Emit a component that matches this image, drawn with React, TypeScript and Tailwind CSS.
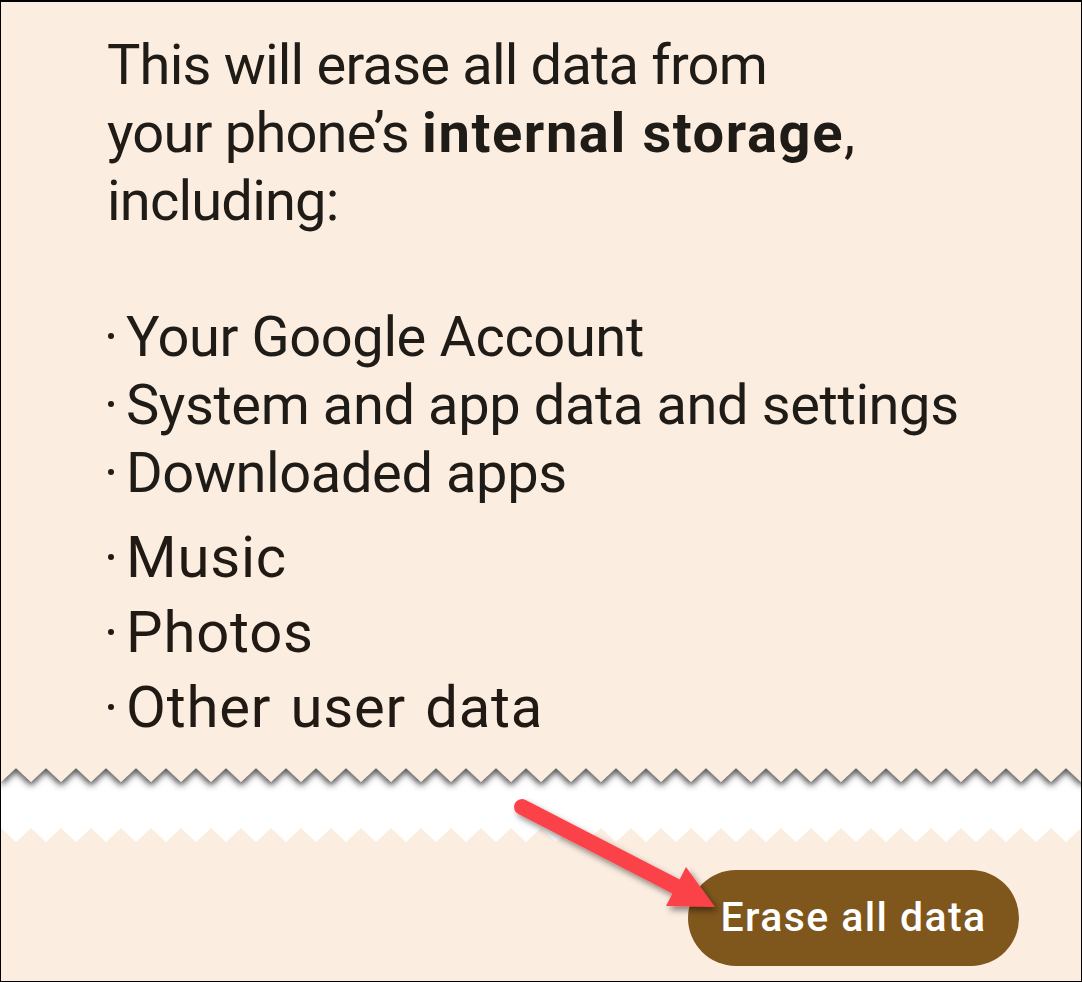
import React from 'react'

const items = ['Your Google Account', 'System and app data and settings', 'Downloaded apps']
const bigItems = ['Music', 'Photos', 'Other user data']

function TornEdge() {
    // white strip with zig-zag edges, 30px teeth
    const w = 1080
    const top: string[] = []
    for (let x = 0; x <= w + 30; x += 30) {
        top.push(`${x},22`)
        top.push(`${x + 15},8`)
    }
    const bottom: string[] = []
    for (let x = w + 30; x >= 0; x -= 30) {
        bottom.push(`${x + 15},82`)
        bottom.push(`${x},68`)
    }
    const upper = ['0,0', ...top, `${w + 45},0`].join(' ')
    return (
        <svg width="100%" height="90" viewBox="0 0 1080 90" preserveAspectRatio="none" className="block">
            <defs>
                <filter id="tearShadow" x="-5%" y="-50%" width="110%" height="200%">
                    <feDropShadow dx="0" dy="4" stdDeviation="3" floodColor="#3f3f3f" floodOpacity="0.9" />
                </filter>
            </defs>
            <polygon points={[...top, ...bottom].join(' ')} fill="#ffffff" />
            <polygon points={upper} fill="#fcede1" filter="url(#tearShadow)" />
        </svg>
    )
}

function Arrow() {
    return (
        <svg className="absolute left-0 top-0 pointer-events-none" width="1082" height="982" viewBox="0 0 1082 982">
            <defs>
                <filter id="arrowShadow" x="-20%" y="-20%" width="140%" height="140%">
                    <feDropShadow dx="3" dy="4" stdDeviation="3" floodColor="#000" floodOpacity="0.45" />
                </filter>
            </defs>
            <g filter="url(#arrowShadow)">
                <line x1="521" y1="805" x2="678" y2="886" stroke="#fb434a" strokeWidth="16" strokeLinecap="round" />
                <polygon points="714,905 685,865 665,904" fill="#fb434a" />
            </g>
        </svg>
    )
}

function Bullet() {
    return (
        <span className="w-[18px] shrink-0">
            <span className="inline-block w-[6px] h-[6px] rounded-full bg-current -translate-y-[17px]" />
        </span>
    )
}

export default function App() {
    return (
        <div
            className="relative w-[1082px] h-[982px] overflow-hidden bg-[#fcede1] border border-t-2 border-black text-[#1f1b16]"
            style={{ fontFamily: 'Roboto, "Liberation Sans", sans-serif' }}
        >
            {/* Text block */}
            <div className="pl-[106px] pt-[29px]">
                <p className="text-[56px] leading-[68px] tracking-[-0.8px]">
                    This will erase all data from
                    <br />
                    your phone’s <span className="font-bold tracking-[1.6px]">internal storage</span>,
                    <br />
                    including:
                </p>

                <ul className="mt-[68px] pl-[1px]">
                    {items.map(item => (
                        <li key={item} className="flex items-baseline text-[56px] leading-[68px] tracking-[-0.4px]">
                            <Bullet />
                            <span>{item}</span>
                        </li>
                    ))}
                </ul>
                <ul className="mt-[13px] pl-[1px] text-[#211a14]">
                    {bigItems.map(item => (
                        <li key={item} className="flex items-baseline text-[58px] leading-[75px] tracking-[0.8px] [word-spacing:4px]">
                            <Bullet />
                            <span>{item}</span>
                        </li>
                    ))}
                </ul>
            </div>

            {/* Torn paper divider */}
            <div className="mt-[15px]">
                <TornEdge />
            </div>

            {/* Action */}
            <div className="flex justify-end pr-[62px] mt-[20px]">
                <button className="h-[96px] w-[331px] rounded-full bg-[#7f561c] text-white text-[41px] font-medium tracking-[1.4px] flex items-center justify-center">
                    Erase all data
                </button>
            </div>

            <Arrow />
        </div>
    )
}
